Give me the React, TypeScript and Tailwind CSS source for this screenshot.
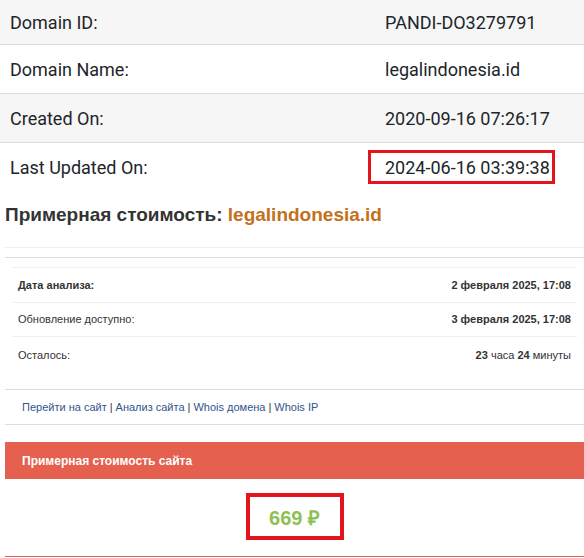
const whois = [
  { label: 'Domain ID:', value: 'PANDI-DO3279791' },
  { label: 'Domain Name:', value: 'legalindonesia.id' },
  { label: 'Created On:', value: '2020-09-16 07:26:17' },
  { label: 'Last Updated On:', value: '2024-06-16 03:39:38', marked: true },
];

export default function App() {
  return (
    <div className="w-[584px] h-[558px] overflow-hidden bg-white">
      {/* Whois table */}
      <div className="font-['Roboto',sans-serif] text-[18px] text-[#212529]">
        {whois.map((row, index) => (
          <div
            key={row.label}
            className={`grid grid-cols-[375px_1fr] items-center border-b border-[#dcdcdc] ${
              index === 0 ? 'h-[45px]' : 'h-[49px]'
            } ${index % 2 === 0 ? 'bg-[#f6f6f6]' : 'bg-white'} ${index === 3 ? 'border-b-0' : ''}`}
          >
            <div className="pl-[10px]">{row.label}</div>
            <div className="relative pl-[10px] leading-[27px]">
              {row.value}
              {row.marked && (
                <div className="absolute left-[-7px] top-[-4px] h-[34px] w-[187px] border-[3px] border-[#e3141c]" />
              )}
            </div>
          </div>
        ))}
      </div>

      {/* Estimated value */}
      <div className="pl-[5px] font-['Liberation_Sans',Arial,sans-serif]">
        <h2 className="mt-[11px] text-[19px] font-bold leading-[24px] text-[#333]">
          Примерная стоимость: <span className="text-[#c2711c]">legalindonesia.id</span>
        </h2>

        <div className="mt-[20px] border-t border-[#eeeeee]" />

        <div className="mt-[9px] border-t border-[#dddddd] pt-[9px]">
          <div className="mx-[7px] border-t border-[#eeeeee] text-[11px] text-[#333]">
            <div className="flex h-[35px] items-center justify-between border-b border-[#eeeeee] px-[6px]">
              <span className="font-bold">Дата анализа:</span>
              <span className="font-bold">2 февраля 2025, 17:08</span>
            </div>
            <div className="flex h-[34px] items-center justify-between border-b border-[#eeeeee] px-[6px]">
              <span>Обновление доступно:</span>
              <span className="font-bold">3 февраля 2025, 17:08</span>
            </div>
            <div className="flex h-[36px] items-center justify-between px-[6px]">
              <span>Осталось:</span>
              <span>
                <b>23</b> часа <b>24</b> минуты
              </span>
            </div>
          </div>

          <div className="mt-[16px] border-t border-[#dddddd]">
            <div className="flex h-[34px] items-center pl-[17px] text-[11px] text-[#31558c]">
              <a>Перейти на сайт</a>
              <span className="px-[3px] text-[#333]">|</span>
              <a>Анализ сайта</a>
              <span className="px-[3px] text-[#333]">|</span>
              <a>Whois домена</a>
              <span className="px-[3px] text-[#333]">|</span>
              <a>Whois IP</a>
            </div>
          </div>
          <div className="border-t border-[#dddddd]" />
        </div>

        <div className="mt-[17px] border-b border-[#e5604f]">
          <div className="flex h-[37px] items-center bg-[#e5604f] pl-[17px] text-[12px] font-bold text-white">
            Примерная стоимость сайта
          </div>
          <div className="flex h-[77px] items-center justify-center">
            <div className="relative text-[20px] font-bold text-[#8dc153]">
              669 ₽
              <div className="absolute left-[-23px] top-[-10px] h-[47px] w-[98px] border-[4px] border-[#e3141c]" />
            </div>
          </div>
        </div>
      </div>
    </div>
  );
}
